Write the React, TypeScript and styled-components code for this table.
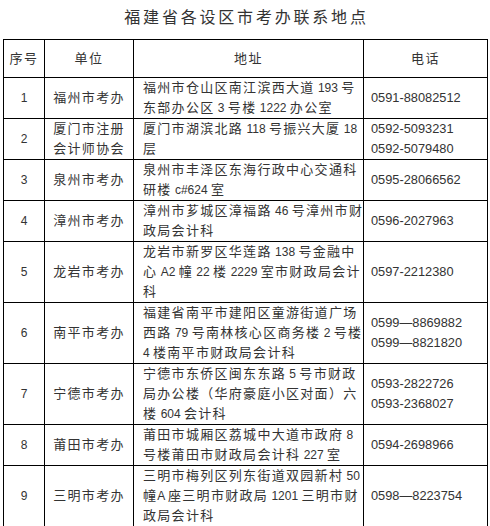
import React from 'react';
import styled, { createGlobalStyle } from 'styled-components';

const GlobalStyle = createGlobalStyle`
    html, body {
        margin: 0;
        padding: 0;
        background: #fff;
    }
    body {
        font-family: "Liberation Sans", "Noto Sans CJK SC", sans-serif;
        color: #333;
    }
`;

type Office = {
    no: string;
    unit: string[];
    address: string[];
    phone: string[];
};

const OFFICES: Office[] = [
    {
        no: '1',
        unit: ['福州市考办'],
        address: ['福州市仓山区南江滨西大道 193 号', '东部办公区 3 号楼 1222 办公室'],
        phone: ['0591-88082512'],
    },
    {
        no: '2',
        unit: ['厦门市注册', '会计师协会'],
        address: ['厦门市湖滨北路 118 号振兴大厦 18', '层'],
        phone: ['0592-5093231', '0592-5079480'],
    },
    {
        no: '3',
        unit: ['泉州市考办'],
        address: ['泉州市丰泽区东海行政中心交通科', '研楼 c#624 室'],
        phone: ['0595-28066562'],
    },
    {
        no: '4',
        unit: ['漳州市考办'],
        address: ['漳州市芗城区漳福路 46 号漳州市财', '政局会计科'],
        phone: ['0596-2027963'],
    },
    {
        no: '5',
        unit: ['龙岩市考办'],
        address: ['龙岩市新罗区华莲路 138 号金融中', '心 A2 幢 22 楼 2229 室市财政局会计', '科'],
        phone: ['0597-2212380'],
    },
    {
        no: '6',
        unit: ['南平市考办'],
        address: ['福建省南平市建阳区童游街道广场', '西路 79 号南林核心区商务楼 2 号楼', '4 楼南平市财政局会计科'],
        phone: ['0599—8869882', '0599—8821820'],
    },
    {
        no: '7',
        unit: ['宁德市考办'],
        address: ['宁德市东侨区闽东东路 5 号市财政', '局办公楼（华府豪庭小区对面）六', '楼 604 会计科'],
        phone: ['0593-2822726', '0593-2368027'],
    },
    {
        no: '8',
        unit: ['莆田市考办'],
        address: ['莆田市城厢区荔城中大道市政府 8', '号楼莆田市财政局会计科 227 室'],
        phone: ['0594-2698966'],
    },
    {
        no: '9',
        unit: ['三明市考办'],
        address: ['三明市梅列区列东街道双园新村 50', '幢A 座三明市财政局 1201 三明市财', '政局会计科'],
        phone: ['0598—8223754'],
    },
];

const Page = styled.div`
    width: 490px;
    padding-left: 3px;
    box-sizing: border-box;
`;

const Title = styled.h1`
    margin: 0 0 9px;
    padding-top: 6px;
    height: 24px;
    line-height: 24px;
    text-align: center;
    font-size: 16px;
    font-weight: normal;
    letter-spacing: 2.8px;
    color: #333;
`;

const Table = styled.table`
    width: 484px;
    border-collapse: collapse;
    table-layout: fixed;
    font-size: 13px;
`;

const Cell = styled.td<{ $align?: 'left' | 'center'; $pad?: number }>`
    border: 1px solid #000;
    padding: 0 0 0 ${(p) => p.$pad ?? 0}px;
    line-height: 20px;
    vertical-align: middle;
    text-align: ${(p) => p.$align ?? 'center'};
    letter-spacing: 1.3px;
    white-space: nowrap;
    overflow: hidden;
`;

const HeadCell = styled.th`
    border: 1px solid #000;
    height: 37px;
    padding: 0;
    font-weight: normal;
    line-height: 20px;
    text-align: center;
    letter-spacing: 1.5px;
`;

const Line = styled.div`
    height: 20px;
`;

const Num = styled.span`
    font-size: 12px;
    letter-spacing: 0;
`;

const Phone = styled.div`
    height: 20px;
    letter-spacing: 0;
    font-size: 12.8px;
`;

function renderText(text: string) {
    return text.split(/([\x20-\x7e]+)/).map((part, i) =>
        /^[\x20-\x7e]+$/.test(part) ? <Num key={i}>{part}</Num> : part
    );
}

export default function App() {
    return (
        <Page>
            <GlobalStyle />
            <Title>福建省各设区市考办联系地点</Title>
            <Table>
                <colgroup>
                    <col style={{ width: 41 }} />
                    <col style={{ width: 89 }} />
                    <col style={{ width: 230 }} />
                    <col style={{ width: 124 }} />
                </colgroup>
                <thead>
                    <tr>
                        <HeadCell>序号</HeadCell>
                        <HeadCell>单位</HeadCell>
                        <HeadCell>地址</HeadCell>
                        <HeadCell>电话</HeadCell>
                    </tr>
                </thead>
                <tbody>
                    {OFFICES.map((office) => (
                        <tr key={office.no}>
                            <Cell>
                                <Num>{office.no}</Num>
                            </Cell>
                            <Cell>
                                {office.unit.map((u) => (
                                    <Line key={u}>{u}</Line>
                                ))}
                            </Cell>
                            <Cell $align="left" $pad={9}>
                                {office.address.map((a) => (
                                    <Line key={a}>{renderText(a)}</Line>
                                ))}
                            </Cell>
                            <Cell $align="left" $pad={7}>
                                {office.phone.map((p) => (
                                    <Phone key={p}>{p}</Phone>
                                ))}
                            </Cell>
                        </tr>
                    ))}
                </tbody>
            </Table>
        </Page>
    );
}
